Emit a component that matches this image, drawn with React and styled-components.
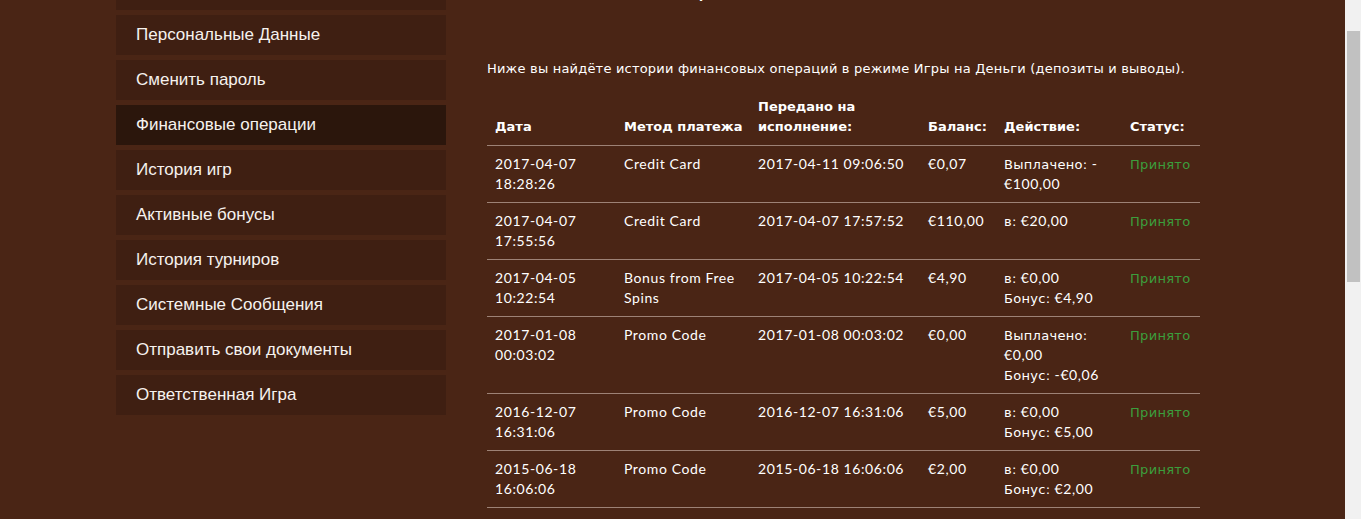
import React, { useLayoutEffect } from 'react';
import styled, { createGlobalStyle } from 'styled-components';

const GlobalStyle = createGlobalStyle`
  html, body {
    margin: 0;
    padding: 0;
    background: #4a2515;
    scrollbar-width: none;
  }
  body {
    padding-right: 16px;
    font-family: Lato, 'DejaVu Sans', sans-serif;
    color: #fff;
  }
`;

const menu = [
  { label: 'Мой баланс' },
  { label: 'Персональные Данные' },
  { label: 'Сменить пароль' },
  { label: 'Финансовые операции', active: true },
  { label: 'История игр' },
  { label: 'Активные бонусы' },
  { label: 'История турниров' },
  { label: 'Системные Сообщения' },
  { label: 'Отправить свои документы' },
  { label: 'Ответственная Игра' },
];

const rows = [
  ['2017-04-07 18:28:26', 'Credit Card', '2017-04-11 09:06:50', '€0,07', ['Выплачено: -€100,00']],
  ['2017-04-07 17:55:56', 'Credit Card', '2017-04-07 17:57:52', '€110,00', ['в: €20,00']],
  ['2017-04-05 10:22:54', 'Bonus from Free Spins', '2017-04-05 10:22:54', '€4,90', ['в: €0,00', 'Бонус: €4,90']],
  ['2017-01-08 00:03:02', 'Promo Code', '2017-01-08 00:03:02', '€0,00', ['Выплачено: €0,00', 'Бонус: -€0,06']],
  ['2016-12-07 16:31:06', 'Promo Code', '2016-12-07 16:31:06', '€5,00', ['в: €0,00', 'Бонус: €5,00']],
  ['2015-06-18 16:06:06', 'Promo Code', '2015-06-18 16:06:06', '€2,00', ['в: €0,00', 'Бонус: €2,00']],
  ['2015-06-12 20:14:31', 'Credit Card', '2015-06-12 20:15:02', '€0,00', ['в: €10,00']],
  ['2015-06-10 18:40:12', 'Credit Card', '2015-06-10 18:41:45', '€20,00', ['в: €20,00']],
  ['2015-05-28 11:03:27', 'Promo Code', '2015-05-28 11:03:27', '€5,00', ['в: €0,00', 'Бонус: €5,00']],
  ['2015-05-21 09:12:40', 'Credit Card', '2015-05-21 09:13:11', '€15,00', ['в: €15,00']],
  ['2015-05-14 22:51:08', 'Credit Card', '2015-05-14 22:52:19', '€10,00', ['в: €10,00']],
];

const cols = [129, 134, 170, 76, 126, 78];

// cyrillic words are set in a different face than the latin/digits
const Mixed = ({ text }) =>
  text.split(/([\u0400-\u04FF]+:?)/).map((part, i) =>
    /[\u0400-\u04FF]/.test(part) ? <Cyr key={i}>{part}</Cyr> : part
  );

const App = () => {
  useLayoutEffect(() => {
    window.scrollTo(0, 64);
  }, []);

  return (
    <>
      <GlobalStyle />
      <Page>
        <Sidebar>
          {menu.map((m) => (
            <MenuItem key={m.label} $active={m.active}>{m.label}</MenuItem>
          ))}
        </Sidebar>
        <Main>
          <Title>Финансовые операции</Title>
          <Intro>Ниже вы найдёте истории финансовых операций в режиме Игры на Деньги (депозиты и выводы).</Intro>
          <Table>
            <colgroup>
              {cols.map((w, i) => <col key={i} style={{ width: w }} />)}
            </colgroup>
            <thead>
              <tr>
                <Th>Дата</Th>
                <Th $nowrap>Метод платежа</Th>
                <Th>Передано на исполнение:</Th>
                <Th>Баланс:</Th>
                <Th>Действие:</Th>
                <Th>Статус:</Th>
              </tr>
            </thead>
            <tbody>
              {rows.map((r, i) => (
                <tr key={i}>
                  <Td>{r[0]}</Td>
                  <Td>{r[1]}</Td>
                  <Td>{r[2]}</Td>
                  <Td>{r[3]}</Td>
                  <Td>
                    {r[4].map((line) => <div key={line}><Mixed text={line} /></div>)}
                  </Td>
                  <Td><Status>Принято</Status></Td>
                </tr>
              ))}
            </tbody>
          </Table>
        </Main>
      </Page>
      <Scrollbar>
        <Thumb />
      </Scrollbar>
    </>
  );
};

export default App;

const Page = styled.div`
  width: 1113px;
  margin: 0 auto;
  padding: 34px 0 100px;
  display: flex;
  align-items: flex-start;
`;

const Sidebar = styled.div`
  width: 330px;
  flex: none;
  display: flex;
  flex-direction: column;
  gap: 5px;
`;

const MenuItem = styled.div`
  height: 40px;
  padding: 0 20px;
  display: flex;
  align-items: center;
  font-family: 'Liberation Sans', Arial, sans-serif;
  font-size: 17px;
  color: #f6f2ee;
  background: ${(p) => (p.$active ? '#2b160c' : '#3f1f12')};
`;

const Main = styled.div`
  margin-left: 41px;
  width: 713px;
`;

const Title = styled.h1`
  margin: 3px 0 0;
  font-family: 'DejaVu Sans', sans-serif;
  font-weight: normal;
  font-size: 24px;
  line-height: 30px;
`;

const Intro = styled.p`
  margin: 56px 0 10px;
  font-family: 'DejaVu Sans', sans-serif;
  font-size: 13px;
  line-height: 20px;
  letter-spacing: 0.2px;
`;

const Table = styled.table`
  width: 713px;
  table-layout: fixed;
  border-collapse: collapse;
  font-size: 14px;
  line-height: 20px;
  letter-spacing: 0.6px;
`;

const Th = styled.th`
  text-align: left;
  vertical-align: bottom;
  padding: 8px;
  font-family: 'DejaVu Sans', sans-serif;
  font-size: 13px;
  font-weight: bold;
  letter-spacing: 0;
  white-space: ${(p) => (p.$nowrap ? 'nowrap' : 'normal')};
  border-bottom: 1px solid #9d8276;
`;

const Td = styled.td`
  vertical-align: top;
  padding: 8px;
  border-bottom: 1px solid #9d8276;
`;

const Cyr = styled.span`
  font-family: 'DejaVu Sans', sans-serif;
  font-size: 13px;
  line-height: 14px;
  letter-spacing: 0.3px;
`;

const Status = styled.span`
  font-family: 'DejaVu Sans', sans-serif;
  font-size: 13px;
  line-height: 14px;
  letter-spacing: 0.3px;
  color: #3c9e3c;
`;

const Scrollbar = styled.div`
  position: fixed;
  top: 0;
  right: 0;
  bottom: 0;
  width: 16px;
  background: #f1f1f1;
`;

const Thumb = styled.div`
  margin: 31px 1px 0 2px;
  height: 251px;
  background: #c1c1c1;
`;
